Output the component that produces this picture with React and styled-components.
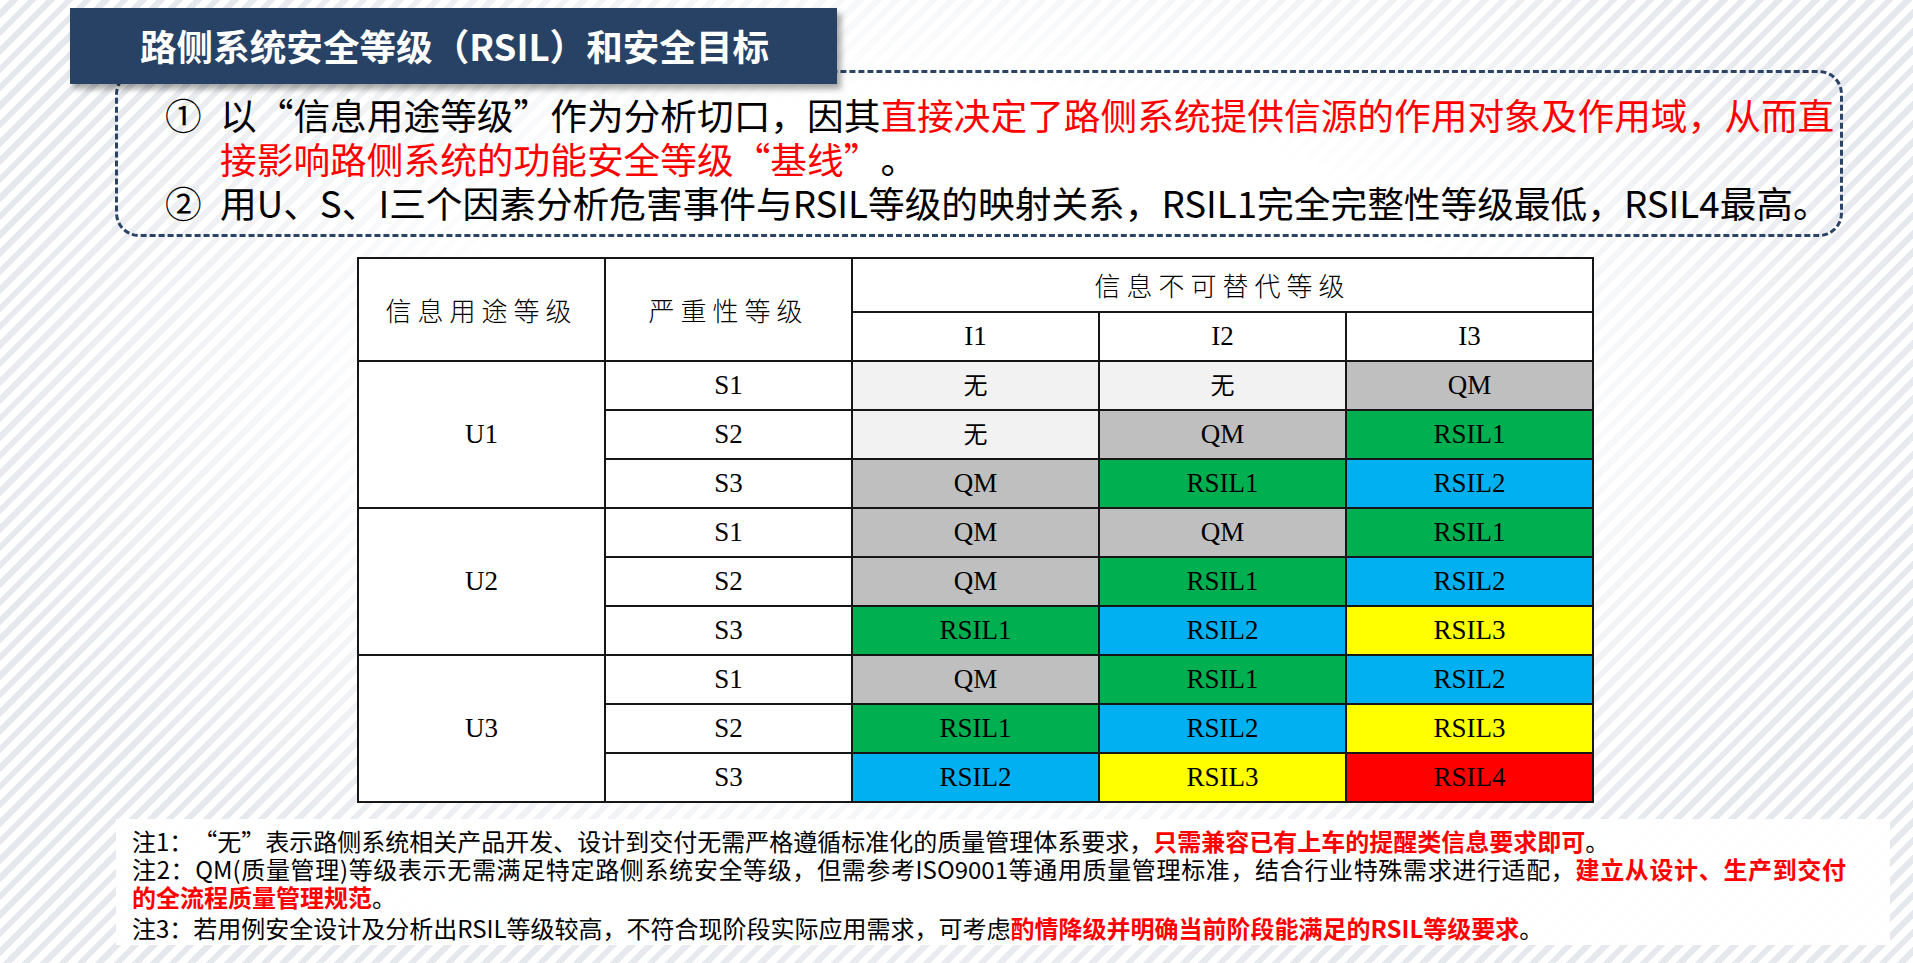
import React from 'react';
import styled, { createGlobalStyle } from 'styled-components';

const Global = createGlobalStyle`
  html, body { margin: 0; padding: 0; }
  body {
    font-family: "Noto Sans CJK SC", "Noto Sans", sans-serif;
    background: #fff;
    text-spacing-trim: space-all;
  }
`;

const Page = styled.div`
  width: 1913px;
  height: 963px;
  overflow: hidden;
  box-sizing: border-box;
  padding-top: 8px;
  display: flex;
  flex-direction: column;
  background:
    radial-gradient(ellipse 52% 62% at 50% 42%, #fff 52%, rgba(255,255,255,0) 100%),
    repeating-linear-gradient(135deg, #ffffff 0 7px, #e5e8ed 7px 13px);
`;

const TitleBar = styled.h1`
  margin: 0 0 -14px 70px;
  width: 767px;
  height: 76px;
  box-sizing: border-box;
  padding-left: 70px;
  background: #284265;
  color: #fff;
  font-family: "Noto Sans CJK SC", sans-serif;
  font-weight: 700;
  font-size: 36.6px;
  line-height: 76px;
  letter-spacing: 0;
  white-space: nowrap;
  box-shadow: 4px 5px 6px rgba(0, 0, 0, 0.35);
  position: relative;
  z-index: 1;
`;

const Callout = styled.div`
  margin-left: 115px;
  width: 1728px;
  height: 167px;
  box-sizing: border-box;
  border: 3px dashed #2b4466;
  border-radius: 24px;
  padding: 19px 0 0 47px;
  font-size: 36.7px;
  line-height: 44px;
  color: #000;
`;

const Item = styled.div`
  display: flex;
  white-space: nowrap;
`;

const Marker = styled.span`
  flex: 0 0 55px;
`;

const Red = styled.span`
  color: #ff0000;
  font-weight: ${(p) => (p.$bold ? 700 : 'inherit')};
`;

const Table = styled.table`
  margin: 20px 0 0 357px;
  border-collapse: collapse;
  table-layout: fixed;
  width: 1235px;
  background: #fff;
  font-family: "Liberation Serif", "Noto Sans CJK SC", serif;
  font-size: 27px;
  color: #000;
`;

const Col = styled.col`
  width: 247px;
`;

const Row = styled.tr`
  height: ${(p) => p.$h || 49}px;
`;

const Cell = styled.td`
  border: 2px solid #161616;
  padding: 0;
  text-align: center;
  vertical-align: middle;
  background: ${(p) => p.$bg || '#fff'};
  font-size: ${(p) => (p.$cjk ? '24px' : '27px')};
  line-height: 1;
`;

const HeadCell = styled.th`
  border: 2px solid #161616;
  padding: 0;
  text-align: center;
  vertical-align: middle;
  background: #fff;
  font-family: ${(p) => (p.$cjk ? '"Noto Sans CJK SC", sans-serif' : '"Liberation Serif", serif')};
  font-weight: ${(p) => (p.$cjk ? 300 : 400)};
  font-size: ${(p) => (p.$cjk ? '26px' : '27px')};
  letter-spacing: ${(p) => (p.$cjk ? '6px' : '0')};
  line-height: 1;
`;

const Notes = styled.div`
  margin: 16px 0 0 116px;
  width: 1774px;
  box-sizing: border-box;
  padding: 8px 0 3px 16px;
  background: rgba(255, 255, 255, 0.96);
  font-size: 24px;
  line-height: 28px;
  color: #000;
  white-space: nowrap;
`;

const Note = styled.div`
  margin-top: ${(p) => (p.$gap ? '3px' : '0')};
  width: ${(p) => (p.$justify ? '1714px' : 'auto')};
  text-align: ${(p) => (p.$justify ? 'justify' : 'left')};
  text-align-last: ${(p) => (p.$justify ? 'justify' : 'auto')};
  text-justify: inter-character;
`;

const colors = {
  '无': '#f2f2f2',
  QM: '#bfbfbf',
  RSIL1: '#00b050',
  RSIL2: '#00b0f0',
  RSIL3: '#ffff00',
  RSIL4: '#ff0000',
};

const groups = [
  {
    u: 'U1',
    rows: [
      ['S1', ['无', '无', 'QM']],
      ['S2', ['无', 'QM', 'RSIL1']],
      ['S3', ['QM', 'RSIL1', 'RSIL2']],
    ],
  },
  {
    u: 'U2',
    rows: [
      ['S1', ['QM', 'QM', 'RSIL1']],
      ['S2', ['QM', 'RSIL1', 'RSIL2']],
      ['S3', ['RSIL1', 'RSIL2', 'RSIL3']],
    ],
  },
  {
    u: 'U3',
    rows: [
      ['S1', ['QM', 'RSIL1', 'RSIL2']],
      ['S2', ['RSIL1', 'RSIL2', 'RSIL3']],
      ['S3', ['RSIL2', 'RSIL3', 'RSIL4']],
    ],
  },
];

export default function App() {
  return (
    <Page>
      <Global />
      <TitleBar>路侧系统安全等级（RSIL）和安全目标</TitleBar>
      <Callout>
        <Item>
          <Marker>①</Marker>
          <span>
            以“信息用途等级”作为分析切口，因其<Red>直接决定了路侧系统提供信源的作用对象及作用域，从而直</Red>
            <br />
            <Red>接影响路侧系统的功能安全等级“基线”</Red>。
          </span>
        </Item>
        <Item>
          <Marker>②</Marker>
          <span>用U、S、I三个因素分析危害事件与RSIL等级的映射关系，RSIL1完全完整性等级最低，RSIL4最高。</span>
        </Item>
      </Callout>

      <Table>
        <colgroup>
          <Col />
          <Col />
          <Col />
          <Col />
          <Col />
        </colgroup>
        <thead>
          <Row $h={54}>
            <HeadCell rowSpan={2} $cjk>信息用途等级</HeadCell>
            <HeadCell rowSpan={2} $cjk>严重性等级</HeadCell>
            <HeadCell colSpan={3} $cjk>信息不可替代等级</HeadCell>
          </Row>
          <Row>
            <HeadCell>I1</HeadCell>
            <HeadCell>I2</HeadCell>
            <HeadCell>I3</HeadCell>
          </Row>
        </thead>
        <tbody>
          {groups.map((g) =>
            g.rows.map(([s, vals], i) => (
              <Row key={g.u + s}>
                {i === 0 && <Cell rowSpan={3}>{g.u}</Cell>}
                <Cell>{s}</Cell>
                {vals.map((v, j) => (
                  <Cell key={j} $bg={colors[v]} $cjk={v === '无'}>
                    {v}
                  </Cell>
                ))}
              </Row>
            ))
          )}
        </tbody>
      </Table>

      <Notes>
        <Note>
          注1：“无”表示路侧系统相关产品开发、设计到交付无需严格遵循标准化的质量管理体系要求，<Red $bold>只需兼容已有上车的提醒类信息要求即可</Red>。
        </Note>
        <Note $justify>
          注2：QM(质量管理)等级表示无需满足特定路侧系统安全等级，但需参考ISO9001等通用质量管理标准，结合行业特殊需求进行适配，<Red $bold>建立从设计、生产到交付</Red>
        </Note>
        <Note>
          <Red $bold>的全流程质量管理规范</Red>。
        </Note>
        <Note $gap>
          注3：若用例安全设计及分析出RSIL等级较高，不符合现阶段实际应用需求，可考虑<Red $bold>酌情降级并明确当前阶段能满足的RSIL等级要求</Red>。
        </Note>
      </Notes>
    </Page>
  );
}
